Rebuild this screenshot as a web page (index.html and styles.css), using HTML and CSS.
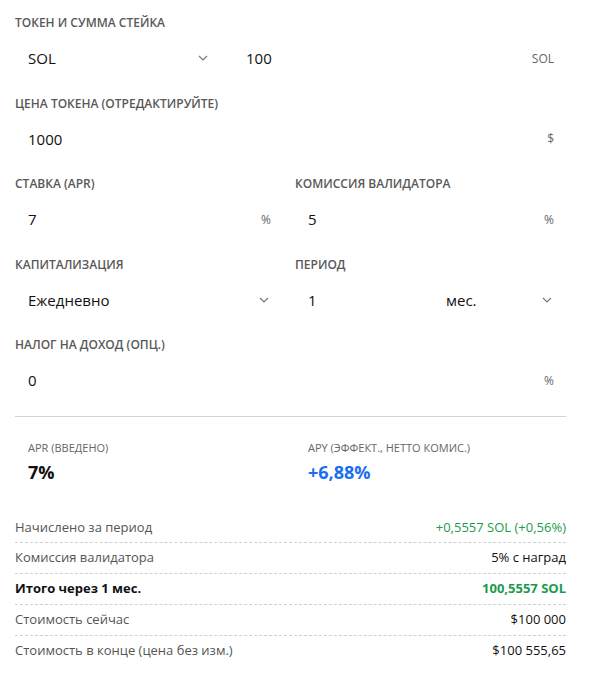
FILE: index.html
```html
<!DOCTYPE html>
<html lang="ru">
<head>
  <meta charset="UTF-8" />
  <meta name="viewport" content="width=device-width, initial-scale=1.0" />
  <title>Калькулятор стейкинга</title>
  <link rel="stylesheet" href="styles.css">
</head>
<body>
  <div class="calc">
    <div class="field">
      <label class="label">Токен и сумма стейка</label>
      <div class="pair">
        <div class="box select token">
          <span>SOL</span>
          <svg class="chev" width="10" height="6" viewBox="0 0 10 6"><polyline points="1,1 5,5 9,1" /></svg>
        </div>
        <div class="box grow">
          <span>100</span>
          <span class="suffix">SOL</span>
        </div>
      </div>
    </div>

    <div class="field">
      <label class="label">Цена токена (отредактируйте)</label>
      <div class="box">
        <span>1000</span>
        <span class="suffix">$</span>
      </div>
    </div>

    <div class="cols">
      <div class="field">
        <label class="label">Ставка (APR)</label>
        <div class="box">
          <span>7</span>
          <span class="suffix">%</span>
        </div>
      </div>
      <div class="field">
        <label class="label">Комиссия валидатора</label>
        <div class="box">
          <span>5</span>
          <span class="suffix">%</span>
        </div>
      </div>
    </div>

    <div class="cols">
      <div class="field">
        <label class="label">Капитализация</label>
        <div class="box select">
          <span>Ежедневно</span>
          <svg class="chev" width="10" height="6" viewBox="0 0 10 6"><polyline points="1,1 5,5 9,1" /></svg>
        </div>
      </div>
      <div class="field">
        <label class="label">Период</label>
        <div class="pair">
          <div class="box grow">
            <span>1</span>
          </div>
          <div class="box select unit">
            <span>мес.</span>
            <svg class="chev" width="10" height="6" viewBox="0 0 10 6"><polyline points="1,1 5,5 9,1" /></svg>
          </div>
        </div>
      </div>
    </div>

    <div class="field">
      <label class="label">Налог на доход (опц.)</label>
      <div class="box">
        <span>0</span>
        <span class="suffix">%</span>
      </div>
    </div>

    <hr class="divider">

    <div class="stats">
      <div class="stat">
        <div class="stat-label">APR (введено)</div>
        <div class="stat-value">7%</div>
      </div>
      <div class="stat">
        <div class="stat-label">APY (эффект., нетто комис.)</div>
        <div class="stat-value blue">+6,88%</div>
      </div>
    </div>

    <div class="rows">
      <div class="row">
        <span>Начислено за период</span>
        <span class="val green">+0,5557 SOL (+0,56%)</span>
      </div>
      <div class="row">
        <span>Комиссия валидатора</span>
        <span class="val">5% с наград</span>
      </div>
      <div class="row total">
        <span>Итого через 1 мес.</span>
        <span class="val green">100,5557 SOL</span>
      </div>
      <div class="row">
        <span>Стоимость сейчас</span>
        <span class="val">$100 000</span>
      </div>
      <div class="row">
        <span>Стоимость в конце (цена без изм.)</span>
        <span class="val">$100 555,65</span>
      </div>
    </div>
  </div>
</body>
</html>
```

FILE: styles.css
```css
body {
  margin: 0;
  background: #fff;
  color: #111;
  font-family: 'Open Sans', 'Noto Sans', sans-serif;
}

.calc {
  width: 551px;
  padding: 14px 0 0 15px;
  display: flex;
  flex-direction: column;
  gap: 13.5px;
}

.field {
  display: flex;
  flex-direction: column;
  gap: 3px;
  min-width: 0;
}

.label {
  font-size: 12px;
  line-height: 18px;
  font-weight: 600;
  text-transform: uppercase;
  color: #595959;
}

/* two columns share one grid so stats line up with the fields */
.cols,
.stats {
  display: grid;
  grid-template-columns: 268px 1fr;
  gap: 12px;
}

.pair {
  display: flex;
  gap: 11px;
}

.box {
  height: 46px;
  padding: 0 12px 0 13px;
  display: flex;
  align-items: center;
  justify-content: space-between;
  font-size: 15px;
  color: #111;
  box-sizing: border-box;
}

.grow { flex: 1; }
.token { width: 207px; }
.unit { width: 133px; padding-right: 14px; }
.select { padding-right: 14px; }

.suffix {
  font-size: 12px;
  color: #666;
}

.chev {
  fill: none;
  stroke: #777;
  stroke-width: 1.2;
}

.divider {
  margin: -1px 0 0;
  border: 0;
  border-top: 1px solid #d4d4d4;
}

.stats {
  padding: 10px 0 15px;
}

.stat {
  padding: 0 13px;
}

.stat-label {
  font-size: 11px;
  line-height: 16px;
  text-transform: uppercase;
  color: #666;
}

.stat-value {
  font-size: 18px;
  line-height: 24px;
  font-weight: 700;
  margin-top: 4px;
}

.blue { color: #1a6ff0; }

.rows {
  display: flex;
  flex-direction: column;
}

.row {
  display: flex;
  justify-content: space-between;
  padding: 6px 0 6.75px;
  font-size: 13px;
  line-height: 17px;
  color: #555;
  border-bottom: 1px dashed #d0d0d0;
}

.row:last-child { border-bottom: 0; }

.val { color: #111; }
.green { color: #1c9b4b; }

.total span { font-weight: 700; color: #111; }
.total .green { color: #1c9b4b; }
```
